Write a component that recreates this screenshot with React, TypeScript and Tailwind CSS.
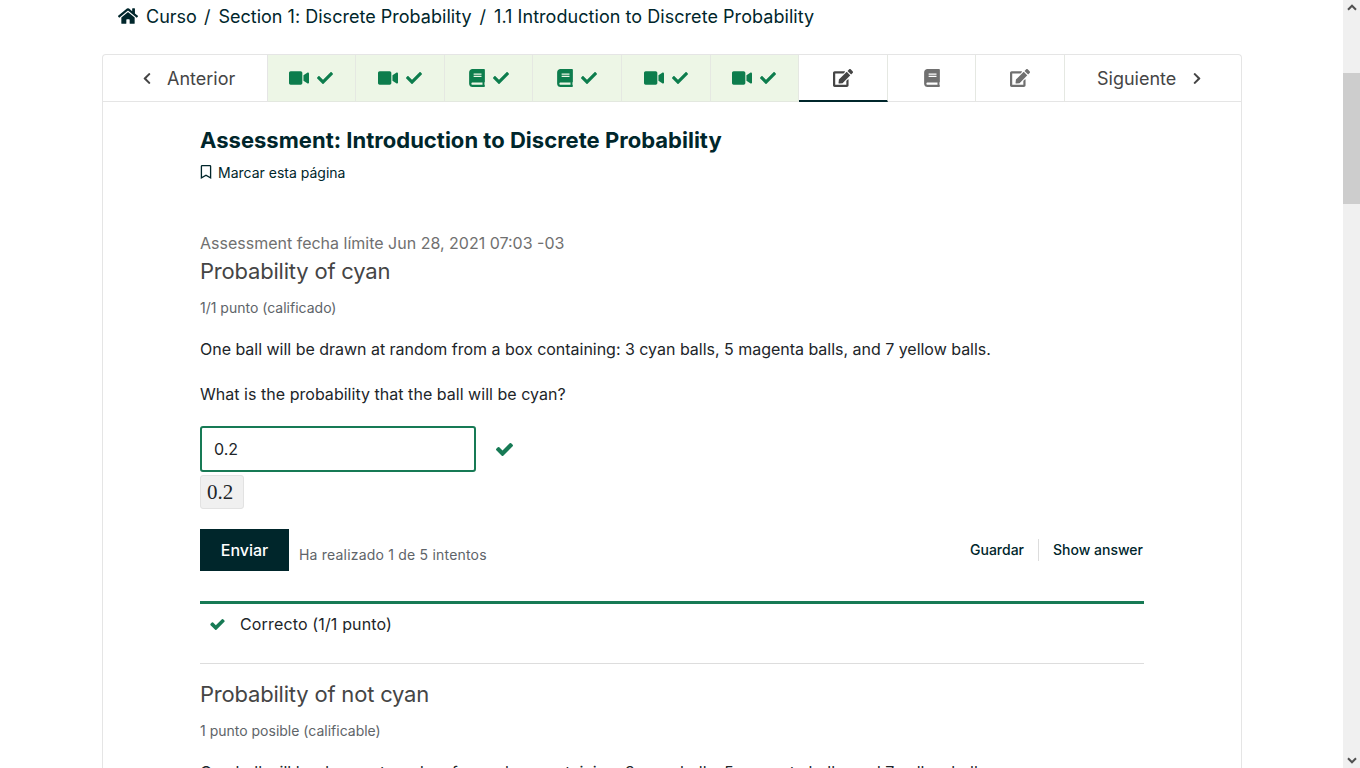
import type { ReactNode } from "react";
import {
  FaHome,
  FaVideo,
  FaBook,
  FaEdit,
  FaRegBookmark,
  FaCheck,
  FaChevronLeft,
  FaChevronRight,
} from "react-icons/fa";

type TabKind = "video" | "book" | "edit";

const tabs: { kind: TabKind; state: "done" | "active" | "todo" }[] = [
  { kind: "video", state: "done" },
  { kind: "video", state: "done" },
  { kind: "book", state: "done" },
  { kind: "book", state: "done" },
  { kind: "video", state: "done" },
  { kind: "video", state: "done" },
  { kind: "edit", state: "active" },
  { kind: "book", state: "todo" },
  { kind: "edit", state: "todo" },
];

const tabStyle = {
  done: "border-b border-[#e3e8df] bg-[#edf6e6] text-[#0d7d4d]",
  active: "border-b-2 border-b-[#00262b] text-[#454545]",
  todo: "border-b border-[#e5e5e5] text-[#707070]",
};

function TabIcon({ kind }: { kind: TabKind }) {
  if (kind === "video") return <FaVideo className="h-[18px] w-[20px]" />;
  if (kind === "book") return <FaBook className="h-[18px] w-[16px]" />;
  return <FaEdit className="h-[18px] w-[20px]" />;
}

function SolidCheck({ className }: { className: string }) {
  return (
    <svg viewBox="121 334 1550 1188" className={className} fill="currentColor">
      <path d="M1671 566q0 40-28 68l-724 724-136 136q-28 28-68 28t-68-28l-136-136-362-362q-28-28-28-68t28-68l136-136q28-28 68-28t68 28l294 295 656-657q28-28 68-28t68 28l136 136q28 28 28 68z" />
    </svg>
  );
}

function Line({ className, children }: { className: string; children: ReactNode }) {
  return <div className={`whitespace-nowrap ${className}`}>{children}</div>;
}

function Breadcrumb() {
  return (
    <nav className="flex h-[54px] items-start pl-[118px] text-[18px] leading-[34px] whitespace-nowrap text-[#00262b]">
      <FaHome className="mt-[6px] mr-2 h-5 w-5" />
      <span>Curso</span>
      <span className="mr-[8px] ml-[7px]">/</span>
      <span className="tracking-[0.02px]">Section 1: Discrete Probability</span>
      <span className="mx-[8px]">/</span>
      <span className="tracking-[0.05px]">1.1 Introduction to Discrete Probability</span>
    </nav>
  );
}

function SequenceNav() {
  return (
    <div className="flex h-[47px] text-[#454545]">
      <div className="flex w-[164.5px] items-center border-r border-b border-[#e5e5e5] pl-[39px] text-[18px]">
        <FaChevronLeft className="mr-[15px] h-[13px] w-[10px]" />
        <span>Anterior</span>
      </div>
      <div className="flex flex-1">
        {tabs.map((t, i) => (
          <div
            key={i}
            className={`flex flex-1 items-center justify-center gap-2 border-r border-r-[#e5e8e2] ${tabStyle[t.state]}`}
          >
            <TabIcon kind={t.kind} />
            {t.state === "done" && <FaCheck className="h-4 w-4" />}
          </div>
        ))}
      </div>
      <div className="flex w-[176px] items-center border-b border-[#e5e5e5] pl-[32px] text-[18px]">
        <span>Siguiente</span>
        <FaChevronRight className="ml-[16px] h-[13px] w-[10px]" />
      </div>
    </div>
  );
}

function Problem() {
  return (
    <section className="flex w-[944px] flex-col text-[16px] text-[#212529]">
      <Line className="-mt-[2px] text-[22px] leading-[36px] tracking-[-0.2px] text-[#454545]">Probability of cyan</Line>
      <Line className="mt-[9px] text-[14px] leading-[20px] text-[#5e6469]">1/1 punto (calificado)</Line>
      <Line className="mt-[18px] leading-[26px] tracking-[-0.02px]">
        One ball will be drawn at random from a box containing: 3 cyan balls, 5 magenta balls, and 7 yellow balls.
      </Line>
      <Line className="mt-[19px] leading-[26px] tracking-[0.03px]">
        What is the probability that the ball will be cyan?
      </Line>
      <div className="mt-[19px] flex items-center">
        <div className="flex h-[46px] w-[276px] items-center rounded-[3px] border-2 border-[#177a55] pl-[12px]">0.2</div>
        <SolidCheck className="ml-[20px] h-[13px] w-[17px] text-[#177a55]" />
      </div>
      <div className="mt-[3px] flex h-[34px] w-[44px] items-center rounded-[3px] border border-[#e2e2e2] bg-[#f0f0f0] pt-[1px] pl-[6px] font-['Liberation_Serif',serif] text-[21px]">
        0.2
      </div>
      <div className="mt-[20px] flex h-[42px] items-center">
        <button className="h-[42px] w-[89px] bg-[#00262b] text-[16px] font-medium text-white">Enviar</button>
        <Line className="mt-[8px] ml-[10px] text-[14px] tracking-[0.2px] text-[#5e6469]">
          Ha realizado 1 de 5 intentos
        </Line>
        <div className="ml-auto flex items-center text-[14px] font-medium text-[#00262b]">
          <span className="pr-[14px] pb-[2px]">Guardar</span>
          <span className="h-[22px] border-l border-[#dddddd]" />
          <span className="pr-[1px] pb-[2px] pl-[14px]">Show answer</span>
        </div>
      </div>
      <div className="mt-[30px] flex h-[63px] items-start border-t-3 border-b border-t-[#177a55] border-b-[#dddddd] pl-[10px]">
        <SolidCheck className="mt-[15px] h-[11px] w-[15px] text-[#177a55]" />
        <Line className="mt-[7px] ml-[15px] leading-[26px] tracking-[0.15px]">Correcto (1/1 punto)</Line>
      </div>
      <Line className="mt-[12px] text-[22px] leading-[36px] tracking-[-0.2px] text-[#454545]">
        Probability of not cyan
      </Line>
      <Line className="mt-[9px] text-[14px] leading-[20px] text-[#5e6469]">1 punto posible (calificable)</Line>
      <Line className="mt-[18px] leading-[26px] tracking-[-0.02px]">
        One ball will be drawn at random from a box containing: 3 cyan balls, 5 magenta balls, and 7 yellow balls.
      </Line>
    </section>
  );
}

function Scrollbar() {
  return (
    <div className="flex h-full w-[17px] flex-col items-center bg-[#f0f0f0] text-[#505050]">
      <svg viewBox="0 0 10 7" className="mt-[4px] h-[7px] w-[10px]" fill="none" stroke="currentColor" strokeWidth="2">
        <path d="M1 5.7 5 1.7 9 5.7" />
      </svg>
      <div className="mt-[62px] h-[131px] w-full bg-[#cdcdcd]" />
      <svg viewBox="0 0 10 7" className="mt-auto mb-[4px] h-[7px] w-[10px]" fill="none" stroke="currentColor" strokeWidth="2">
        <path d="M1 1.3 5 5.3 9 1.3" />
      </svg>
    </div>
  );
}

export default function App() {
  return (
    <div className="flex h-[768px] w-[1360px] overflow-hidden bg-white font-['Inter',sans-serif]">
      <div className="flex h-full w-[1343px] flex-col overflow-hidden">
        <Breadcrumb />
        <main className="ml-[102px] h-[714px] w-[1140px] overflow-hidden rounded-t-[4px] border border-b-0 border-[#e5e5e5]">
          <SequenceNav />
          <div className="flex flex-col pl-[97px]">
            <h1 className="mt-[22px] text-[22px] leading-[32px] font-bold tracking-[0.02px] whitespace-nowrap text-[#00262b]">
              Assessment: Introduction to Discrete Probability
            </h1>
            <div className="mt-[6px] flex h-[20px] items-center text-[14px] text-[#00262b]">
              <FaRegBookmark className="mr-[6px] h-[14px] w-[12px]" />
              <span>Marcar esta página</span>
            </div>
            <Line className="mt-[49px] text-[16px] leading-[24px] text-[#707070]">
              Assessment fecha límite Jun 28, 2021 07:03 -03
            </Line>
            <Problem />
          </div>
        </main>
      </div>
      <Scrollbar />
    </div>
  );
}
